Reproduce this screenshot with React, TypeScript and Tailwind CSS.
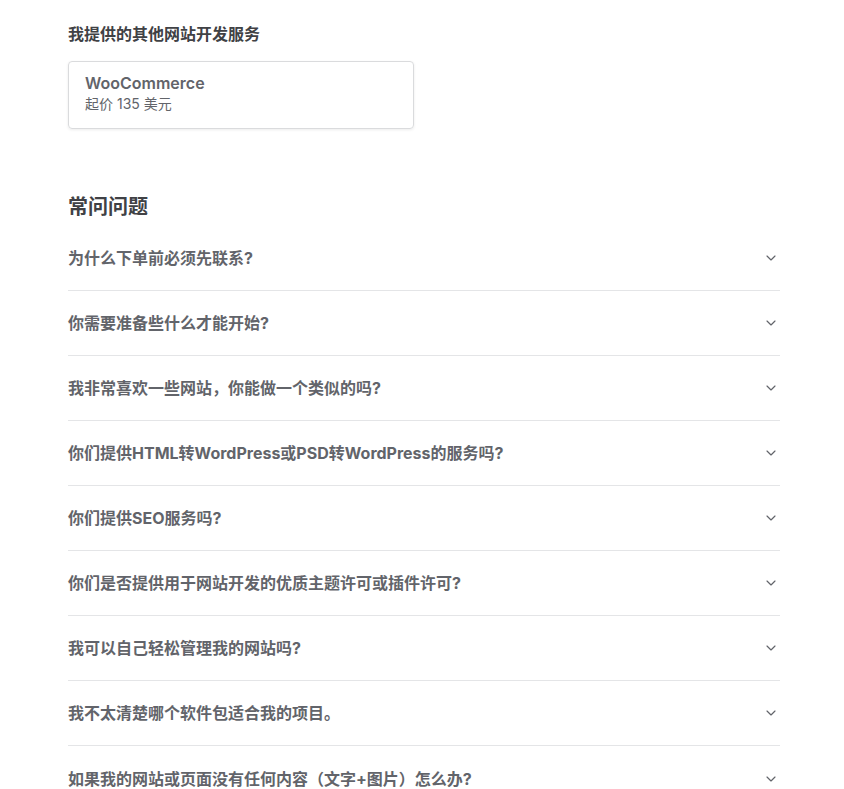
import { ChevronDown } from "lucide-react";

const faqs = [
  "为什么下单前必须先联系?",
  "你需要准备些什么才能开始?",
  "我非常喜欢一些网站，你能做一个类似的吗?",
  "你们提供HTML转WordPress或PSD转WordPress的服务吗?",
  "你们提供SEO服务吗?",
  "你们是否提供用于网站开发的优质主题许可或插件许可?",
  "我可以自己轻松管理我的网站吗?",
  "我不太清楚哪个软件包适合我的项目。",
  "如果我的网站或页面没有任何内容（文字+图片）怎么办?",
];

export default function App() {
  return (
    <main
      className="min-h-screen bg-white pl-[68px] pr-[64px] pt-[23px]"
      style={{ fontFamily: 'Inter, "Noto Sans CJK SC", sans-serif' }}
    >
      <div className="w-[712px]">
        {/* Other services */}
        <h3 className="text-[16px] font-bold leading-[22px] text-[#404145]">我提供的其他网站开发服务</h3>
        <div className="mt-[16px] w-[346px] rounded-[4px] border border-[#dadbdd] px-[16px] pt-[11px] pb-[14px] shadow-[0_1px_3px_rgba(0,0,0,0.08)]">
          <p className="text-[16px] font-semibold leading-[20px] text-[#62646a]">WooCommerce</p>
          <p className="mt-[1px] text-[14px] leading-[20px] text-[#62646a]">起价 135 美元</p>
        </div>

        {/* FAQ */}
        <h2 className="mt-[64px] text-[20px] font-bold leading-[28px] text-[#404145]">常问问题</h2>
        <div className="mt-[5px]">
          {faqs.map((q, i) => (
            <div
              key={q}
              className={
                "flex h-[65px] items-center justify-between " +
                (i < faqs.length - 1 ? "border-b border-[#e4e5e7]" : "")
              }
            >
              <span className="text-[16px] font-bold leading-[22px] text-[#62646a]">{q}</span>
              <ChevronDown className="mr-[1px] h-[16px] w-[16px] text-[#62646a]" strokeWidth={1.75} />
            </div>
          ))}
        </div>
      </div>
    </main>
  );
}
